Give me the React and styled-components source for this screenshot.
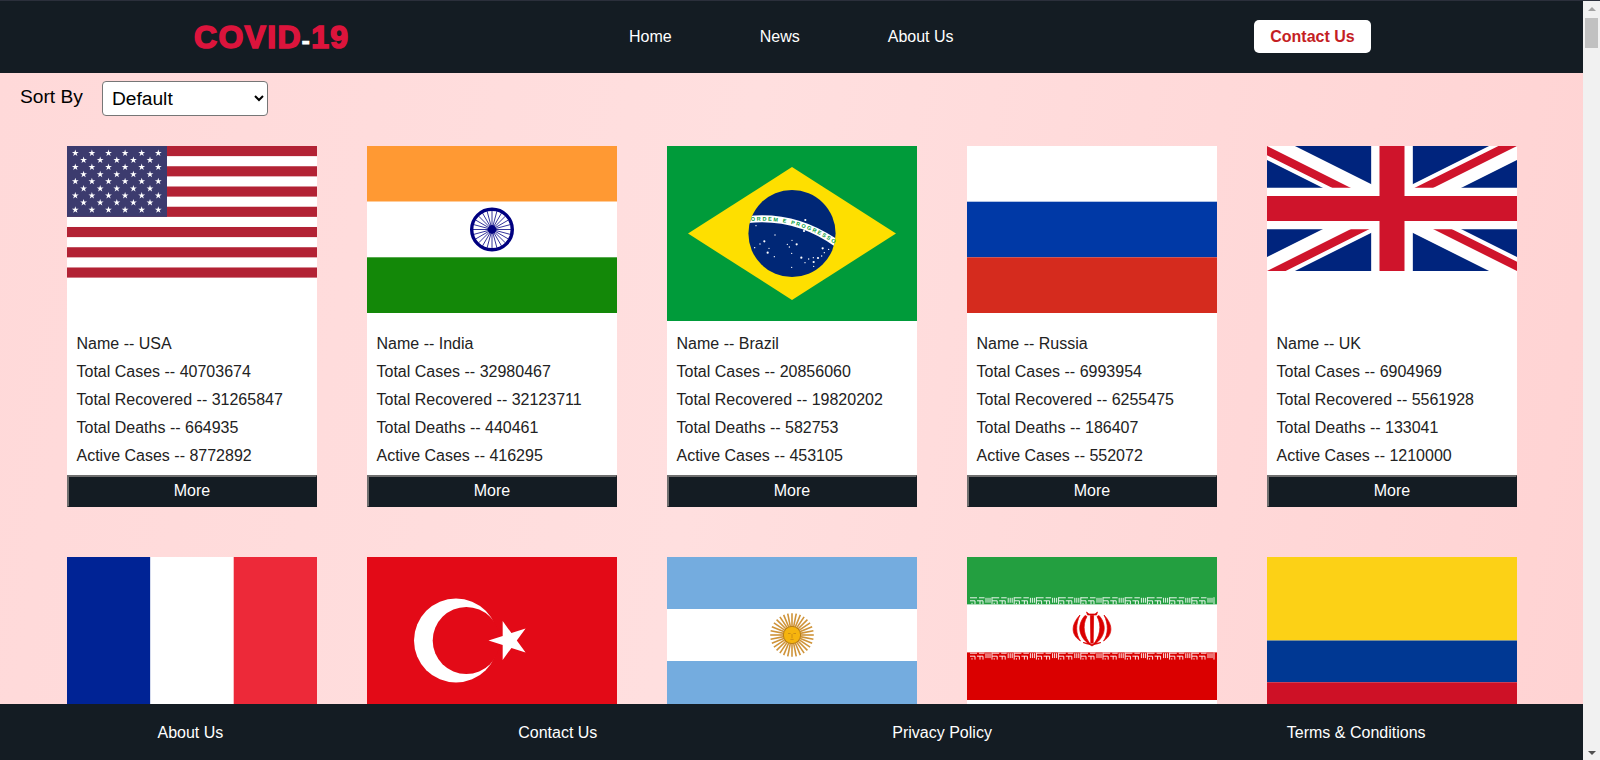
import React from 'react';
import styled, { createGlobalStyle } from 'styled-components';

const GlobalStyle = createGlobalStyle`
  html, body {
    margin: 0;
    padding: 0;
    height: 100%;
    overflow: hidden;
  }
  body {
    font-family: "Liberation Sans", Arial, sans-serif;
  }
`;

const starPoints = (cx, cy, R, r = R * 0.382, rot = -90) => {
  const pts = [];
  for (let i = 0; i < 10; i++) {
    const a = ((rot + i * 36) * Math.PI) / 180;
    const rad = i % 2 === 0 ? R : r;
    pts.push(`${(cx + rad * Math.cos(a)).toFixed(2)},${(cy + rad * Math.sin(a)).toFixed(2)}`);
  }
  return pts.join(' ');
};

const UsaFlag = () => {
  const stripe = 131.6 / 13;
  const stars = [];
  for (let row = 0; row < 9; row++) {
    const count = row % 2 === 0 ? 6 : 5;
    for (let c = 0; c < count; c++) {
      const x = (row % 2 === 0 ? 8.3 : 16.6) + c * 16.6;
      stars.push(<polygon key={`${row}-${c}`} points={starPoints(x, 7 + row * 7.1, 3.6)} fill="#fff" />);
    }
  }
  return (
    <svg width="250" height="132" viewBox="0 0 250 132" style={{ display: 'block' }}>
      <rect width="250" height="132" fill="#fff" />
      {Array.from({ length: 7 }).map((_, i) => (
        <rect key={i} y={i * 2 * stripe} width="250" height={stripe} fill="#b22234" />
      ))}
      <rect width="100" height={stripe * 7} fill="#3c3b6e" />
      {stars}
    </svg>
  );
};

const IndiaFlag = () => (
  <svg width="250" height="167" viewBox="0 0 250 167" style={{ display: 'block' }}>
    <rect width="250" height="55.7" fill="#ff9933" />
    <rect y="55.7" width="250" height="55.6" fill="#fff" />
    <rect y="111.3" width="250" height="55.7" fill="#138808" />
    <circle cx="125" cy="83.5" r="20.3" fill="#fff" stroke="#000080" strokeWidth="3.4" />
    {Array.from({ length: 24 }).map((_, i) => {
      const a = (i * 15 * Math.PI) / 180;
      return (
        <line
          key={i}
          x1={125 + 4 * Math.cos(a)}
          y1={83.5 + 4 * Math.sin(a)}
          x2={125 + 19 * Math.cos(a)}
          y2={83.5 + 19 * Math.sin(a)}
          stroke="#000080"
          strokeWidth="0.8"
        />
      );
    })}
    <circle cx="125" cy="83.5" r="4.4" fill="#000080" />
  </svg>
);

const brazilStars = [
  [436, 240], [288, 257], [345, 285], [432, 273], [396, 301], [382, 313], [410, 313], [388, 321], [300, 312],
  [313, 304], [284, 323], [327, 325], [323, 338], [343, 350], [395, 340], [424, 353], [446, 357], [460, 353],
  [474, 354], [485, 348], [493, 338], [488, 325], [506, 328], [435, 368], [461, 366], [461, 379], [395, 382],
];

const BrazilFlag = () => (
  <svg width="250" height="175" viewBox="0 0 250 175" style={{ display: 'block' }}>
    <defs>
      <clipPath id="brazil-globe">
        <circle cx="125" cy="87.5" r="43.6" />
      </clipPath>
      <path id="brazil-band" d="M80 75.5 Q130 70 172 101" />
    </defs>
    <rect width="250" height="175" fill="#009b3a" />
    <polygon points="21,87.5 125,21 229,87.5 125,154" fill="#fedf00" />
    <circle cx="125" cy="87.5" r="43.6" fill="#002776" />
    <path d="M80 73.5 Q130 68 172 99" fill="none" stroke="#fff" strokeWidth="7" clipPath="url(#brazil-globe)" />
    <text fontFamily="'Liberation Sans', sans-serif" fontSize="5.4" fontWeight="700" fill="#009b3a">
      <textPath href="#brazil-band" startOffset="4" textLength="88">ORDEM E PROGRESSO</textPath>
    </text>
    {brazilStars.map(([x, y], i) => (
      <circle key={i} cx={x / 3 - 7} cy={y / 3 - 6} r={i % 3 === 0 ? 1.1 : 0.7} fill="#fff" />
    ))}
  </svg>
);

const RussiaFlag = () => (
  <svg width="250" height="167" viewBox="0 0 250 167" style={{ display: 'block' }}>
    <rect width="250" height="55.7" fill="#fff" />
    <rect y="55.7" width="250" height="55.6" fill="#0039a6" />
    <rect y="111.3" width="250" height="55.7" fill="#d52b1e" />
  </svg>
);

const UkFlag = () => (
  <svg width="250" height="125" viewBox="0 0 60 30" style={{ display: 'block' }}>
    <defs>
      <clipPath id="uk-clip">
        <path d="M30,15 h30 v15 z v15 h-30 z h-30 v-15 z v-15 h30 z" />
      </clipPath>
    </defs>
    <rect width="60" height="30" fill="#00247d" />
    <path d="M0,0 L60,30 M60,0 L0,30" stroke="#fff" strokeWidth="6" />
    <path d="M0,0 L60,30 M60,0 L0,30" clipPath="url(#uk-clip)" stroke="#cf142b" strokeWidth="4" />
    <path d="M30,0 v30 M0,15 h60" stroke="#fff" strokeWidth="10" />
    <path d="M30,0 v30 M0,15 h60" stroke="#cf142b" strokeWidth="6" />
  </svg>
);

const FranceFlag = () => (
  <svg width="250" height="167" viewBox="0 0 250 167" style={{ display: 'block' }}>
    <rect width="83.4" height="167" fill="#002395" />
    <rect x="83.4" width="83.3" height="167" fill="#fff" />
    <rect x="166.7" width="83.3" height="167" fill="#ed2939" />
  </svg>
);

const TurkeyFlag = () => (
  <svg width="250" height="167" viewBox="0 0 250 167" style={{ display: 'block' }}>
    <rect width="250" height="167" fill="#e30a17" />
    <circle cx="89" cy="83.5" r="42" fill="#fff" />
    <circle cx="99.3" cy="83.5" r="33.6" fill="#e30a17" />
    <polygon points={starPoints(142, 83.5, 20.5, 7.8, 180)} fill="#fff" />
  </svg>
);

const ArgentinaFlag = () => (
  <svg width="250" height="156" viewBox="0 0 250 156" style={{ display: 'block' }}>
    <rect width="250" height="156" fill="#74acdf" />
    <rect y="52" width="250" height="52" fill="#fff" />
    {Array.from({ length: 32 }).map((_, i) => {
      const a = (i * 11.25 * Math.PI) / 180;
      return (
        <line
          key={i}
          x1={125 + 7 * Math.cos(a)}
          y1={78 + 7 * Math.sin(a)}
          x2={125 + 21.8 * Math.cos(a)}
          y2={78 + 21.8 * Math.sin(a)}
          stroke="#cf9338"
          strokeWidth="1.6"
        />
      );
    })}
    <circle cx="125" cy="78" r="8.6" fill="#f6b40e" stroke="#b97f14" strokeWidth="1" />
    <path d="M121 76.5h2.6M126.4 76.5h2.6M125 77v4M123.4 82.4h3.2" stroke="#c98a14" strokeWidth="0.9" fill="none" />
  </svg>
);

const KufiBand = ({ y }) => (
  <g transform={`translate(3 ${y})`}>
    {Array.from({ length: 11 }).map((_, i) => (
      <path
        key={i}
        transform={`translate(${i * 22.2} 0)`}
        d="M0 .6H7M9 .6H14.5M16 .6V5.5M18 .6V5.5M20 .6V5.5M0 3.6H5V7M2 5.6V7M7 3.6H13V7M10 3.6V7M22 0V7"
        stroke="#fff"
        strokeWidth="0.9"
        fill="none"
      />
    ))}
  </g>
);

const IranFlag = () => (
  <svg width="250" height="143" viewBox="0 0 250 143" style={{ display: 'block' }}>
    <rect width="250" height="47.6" fill="#239f40" />
    <rect y="47.6" width="250" height="47.8" fill="#fff" />
    <rect y="95.4" width="250" height="47.6" fill="#da0000" />
    <KufiBand y={40.2} />
    <KufiBand y={95.6} />
    <g fill="#da0000" stroke="#da0000" strokeWidth="0.7">
      <path d="M113 58 C103.5 68 104 78 113.5 84 C108.5 77 108.5 67 113 58Z" />
      <path d="M137 58 C146.5 68 146 78 136.5 84 C141.5 77 141.5 67 137 58Z" />
      <path d="M118 58.5 C109.5 68 111 81 125 89 C116.5 80 115 68 120 59.5Z" />
      <path d="M132 58.5 C140.5 68 139 81 125 89 C133.5 80 135 68 130 59.5Z" />
      <path d="M123.4 58.5H126.6L126.2 86H123.8Z" />
      <path d="M119.5 55L122 57H128L130.5 55L129.5 58H120.5Z" />
      <path d="M116 85.5Q120 86.5 123 86.2V87H127V86.2Q130 86.5 134 85.5Q130 87.6 125 87.6Q120 87.6 116 85.5Z" />
    </g>
  </svg>
);

const ColombiaFlag = () => (
  <svg width="250" height="167" viewBox="0 0 250 167" style={{ display: 'block' }}>
    <rect width="250" height="83.5" fill="#fcd116" />
    <rect y="83.5" width="250" height="41.75" fill="#003893" />
    <rect y="125.25" width="250" height="41.75" fill="#ce1126" />
  </svg>
);

const countries = [
  { name: 'USA', flag: UsaFlag, total: 40703674, recovered: 31265847, deaths: 664935, active: 8772892 },
  { name: 'India', flag: IndiaFlag, total: 32980467, recovered: 32123711, deaths: 440461, active: 416295 },
  { name: 'Brazil', flag: BrazilFlag, total: 20856060, recovered: 19820202, deaths: 582753, active: 453105 },
  { name: 'Russia', flag: RussiaFlag, total: 6993954, recovered: 6255475, deaths: 186407, active: 552072 },
  { name: 'UK', flag: UkFlag, total: 6904969, recovered: 5561928, deaths: 133041, active: 1210000 },
  { name: 'France', flag: FranceFlag },
  { name: 'Turkey', flag: TurkeyFlag },
  { name: 'Argentina', flag: ArgentinaFlag },
  { name: 'Iran', flag: IranFlag },
  { name: 'Colombia', flag: ColombiaFlag },
];

const App = () => (
  <Page>
    <GlobalStyle />
    <Main>
      <Header>
        <Logo>
          COVID<Dash>-</Dash>19
        </Logo>
        <NavLinks>
          <NavLink href="#">Home</NavLink>
          <NavLink href="#">News</NavLink>
          <NavLink href="#">About Us</NavLink>
        </NavLinks>
        <ContactButton>Contact Us</ContactButton>
      </Header>
      <Content>
        <SortBar>
          <SortLabel htmlFor="sort">Sort By</SortLabel>
          <SortSelect id="sort" defaultValue="default">
            <option value="default">Default</option>
            <option value="cases">Total Cases</option>
            <option value="deaths">Total Deaths</option>
          </SortSelect>
        </SortBar>
        <CardGrid>
          {countries.map(({ name, flag: Flag, total, recovered, deaths, active }) => (
            <Card key={name}>
              <FlagBox>
                <Flag />
              </FlagBox>
              {total && (
                <>
                  <Stats>
                    <StatLine>Name -- {name}</StatLine>
                    <StatLine>Total Cases -- {total}</StatLine>
                    <StatLine>Total Recovered -- {recovered}</StatLine>
                    <StatLine>Total Deaths -- {deaths}</StatLine>
                    <StatLine>Active Cases -- {active}</StatLine>
                  </Stats>
                  <MoreButton>More</MoreButton>
                </>
              )}
            </Card>
          ))}
        </CardGrid>
      </Content>
      <Footer>
        <FooterLink href="#">About Us</FooterLink>
        <FooterLink href="#">Contact Us</FooterLink>
        <FooterLink href="#">Privacy Policy</FooterLink>
        <FooterLink href="#">Terms &amp; Conditions</FooterLink>
      </Footer>
    </Main>
    <Scrollbar>
      <ArrowUp />
      <Thumb />
      <Track />
      <ArrowDown />
    </Scrollbar>
  </Page>
);

export default App;

const Page = styled.div`
  display: flex;
  height: 760px;
  box-sizing: border-box;
  border-top: 1px solid #2b2f3b;
  overflow: hidden;
`;

const Main = styled.div`
  flex: 1;
  min-width: 0;
  display: flex;
  flex-direction: column;
`;

const Header = styled.header`
  flex: none;
  height: 72px;
  display: grid;
  grid-template-columns: 435px 624px auto;
  align-items: center;
  padding-left: 194px;
  background: #141c23;
`;

const Logo = styled.div`
  color: #dc143c;
  font-size: 32px;
  font-weight: 700;
  letter-spacing: 1.3px;
  -webkit-text-stroke: 1.6px #dc143c;
  white-space: nowrap;
`;

const Dash = styled.span`
  color: #fff;
  font-size: 24px;
  vertical-align: -1px;
  -webkit-text-stroke: 1px #fff;
`;

const NavLinks = styled.nav`
  display: flex;
  gap: 88px;
`;

const NavLink = styled.a`
  color: #fff;
  font-size: 16px;
  text-decoration: none;
`;

const ContactButton = styled.button`
  justify-self: start;
  width: 117px;
  height: 33px;
  margin: 0 0 1px 1px;
  padding: 0;
  border: none;
  border-radius: 5px;
  background: #fff;
  color: #c41e24;
  font-family: inherit;
  font-size: 16px;
  font-weight: 700;
`;

const Content = styled.main`
  flex: 1;
  min-height: 0;
  overflow: hidden;
  background: linear-gradient(100deg, #ffd9d9 0%, #ffdfdf 45%, #ffd3d3 100%);
`;

const SortBar = styled.div`
  display: flex;
  align-items: flex-start;
  gap: 19px;
  padding: 8px 0 30px 20px;
`;

const SortLabel = styled.label`
  margin-top: 5px;
  font-size: 19.2px;
  line-height: 22px;
  color: #000;
`;

const SortSelect = styled.select`
  width: 166px;
  height: 35px;
  padding-left: 5px;
  border: 1px solid #767676;
  border-radius: 4px;
  background: #fff;
  color: #000;
  font-family: inherit;
  font-size: 19.2px;
`;

const CardGrid = styled.div`
  display: grid;
  grid-template-columns: repeat(5, 250px);
  justify-content: center;
  gap: 50px;
`;

const Card = styled.article`
  display: flex;
  flex-direction: column;
  background: #fff;
`;

const FlagBox = styled.div`
  height: 175px;
`;

const Stats = styled.div`
  padding: 9px 10px 5px;
`;

const StatLine = styled.p`
  margin: 0;
  font-size: 16px;
  line-height: 28px;
  color: #222;
  white-space: nowrap;
`;

const MoreButton = styled.button`
  height: 32px;
  padding: 0 0 2px;
  border-style: solid;
  border-width: 2px 1px 1px 2px;
  border-color: #6f6f6f #141c23 #141c23 #6f6f6f;
  background: #141c23;
  color: #fff;
  font-family: inherit;
  font-size: 16px;
`;

const Footer = styled.footer`
  flex: none;
  height: 56px;
  box-sizing: border-box;
  display: flex;
  align-items: center;
  justify-content: space-around;
  padding: 2px 10px 0;
  background: #141c23;
`;

const FooterLink = styled.a`
  color: #fff;
  font-size: 16px;
  text-decoration: none;
`;

const Scrollbar = styled.div`
  flex: none;
  width: 17px;
  display: flex;
  flex-direction: column;
  align-items: center;
  background: #f1f1f1;
`;

const ArrowUp = styled.div`
  flex: none;
  margin: 6px 0 5px;
  width: 0;
  height: 0;
  border-left: 4px solid transparent;
  border-right: 4px solid transparent;
  border-bottom: 4px solid #a3a3a3;
`;

const Thumb = styled.div`
  flex: none;
  width: 13px;
  height: 30px;
  margin-top: 2px;
  background: #c1c1c1;
`;

const Track = styled.div`
  flex: 1;
`;

const ArrowDown = styled.div`
  flex: none;
  margin-bottom: 5px;
  width: 0;
  height: 0;
  border-left: 4px solid transparent;
  border-right: 4px solid transparent;
  border-top: 4px solid #505050;
`;
